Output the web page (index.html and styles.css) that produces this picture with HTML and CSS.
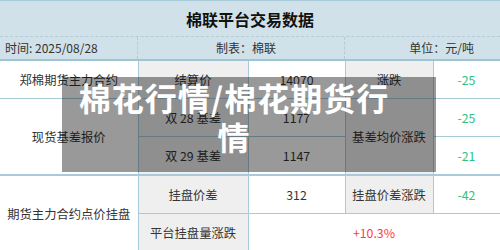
FILE: index.html
```html
<!DOCTYPE html>
<html lang="zh">
<head>
<meta charset="utf-8">
<link rel="stylesheet" href="styles.css">
</head>
<body>
<div class="page">
  <div class="head">
    <div class="title">棉联平台交易数据</div>
    <div class="info">
      <div class="info-cell info-left">时间: 2025/08/28</div>
      <div class="info-cell info-mid">制表：棉联</div>
      <div class="info-cell info-right">单位：元/吨</div>
    </div>
  </div>
  <table class="data">
    <colgroup>
      <col class="c1"><col class="c2"><col class="c3"><col class="c4"><col class="c5">
    </colgroup>
    <tr class="r1">
      <td>郑棉期货主力合约</td>
      <td class="gray">结算价</td>
      <td>14070</td>
      <td class="gray">涨跌</td>
      <td class="down">-25</td>
    </tr>
    <tr class="r2">
      <td rowspan="2">现货基差报价</td>
      <td class="gray">双 28 基差</td>
      <td>1177</td>
      <td class="gray" rowspan="2">基差均价涨跌</td>
      <td class="down">-25</td>
    </tr>
    <tr class="r3">
      <td class="gray">双 29 基差</td>
      <td>1147</td>
      <td class="down">-21</td>
    </tr>
    <tr class="r4">
      <td rowspan="2">期货主力合约点价挂盘</td>
      <td class="gray">挂盘价差</td>
      <td>312</td>
      <td class="gray">挂盘价差涨跌</td>
      <td class="down">-42</td>
    </tr>
    <tr class="r5">
      <td class="gray">平台挂盘量涨跌</td>
      <td class="up" colspan="3">+10.3%</td>
    </tr>
  </table>
  <div class="overlay">棉花行情/棉花期货行<br>情</div>
</div>
</body>
</html>
```

FILE: styles.css
```css
html, body {
  margin: 0;
  padding: 0;
  background: #ffffff;
}
body {
  font-family: "Noto Sans CJK SC", "Noto Sans", sans-serif;
  color: #333333;
}
.page {
  position: relative;
  width: 500px;
  height: 250px;
  overflow: hidden;
}
.head {
  background: #d0e1e9;
  border-top: 1px solid #a9cbd9;
}
.title {
  height: 35px;
  line-height: 36px;
  text-align: center;
  font-size: 16px;
  font-weight: 700;
  color: #111111;
  border-bottom: 1px dashed #b5ccd6;
}
.info {
  display: grid;
  grid-template-columns: 138px 207px 155px;
  height: 22px;
  font-size: 12px;
  line-height: 22px;
  border-bottom: 2px solid #9fc4d4;
}
.info-cell {
  border-right: 1px dashed #b5ccd6;
}
.info-cell:last-child {
  border-right: none;
}
.info-left {
  padding-left: 5px;
}
.info-mid {
  text-align: center;
  padding-left: 10px;
}
.info-right {
  text-align: right;
  padding-right: 26px;
}
.data {
  width: 500px;
  table-layout: fixed;
  border-collapse: collapse;
  font-size: 12.3px;
}
.c1 { width: 138px; }
.c2 { width: 110px; }
.c3 { width: 97px; }
.c4 { width: 88px; }
.c5 { width: 67px; }
.data td {
  border: 1px solid #a9cbd9;
  text-align: center;
  padding: 0;
  height: 37px;
  color: #333333;
}
.data tr:first-child td {
  border-top: none;
}
.data td:first-child {
  border-left: none;
}
.data tr.r4 td {
  border-top: 2px solid #a9cbd9;
}
.data tr.r5 td {
  border-bottom: 2px solid #a9cbd9;
}
.gray {
  background: #efefef;
}
.data td.down {
  color: #2ec27e;
}
.data td.up {
  color: #ff3b3b;
}
.overlay {
  position: absolute;
  left: 62px;
  top: 77px;
  width: 312px;
  height: 94px;
  padding: 1px 46px 0 16px;
  box-sizing: content-box;
  background: rgba(0, 0, 0, 0.4);
  color: #ffffff;
  font-size: 32px;
  font-weight: 700;
  line-height: 39px;
  letter-spacing: 1px;
  text-align: center;
  white-space: nowrap;
}
```
